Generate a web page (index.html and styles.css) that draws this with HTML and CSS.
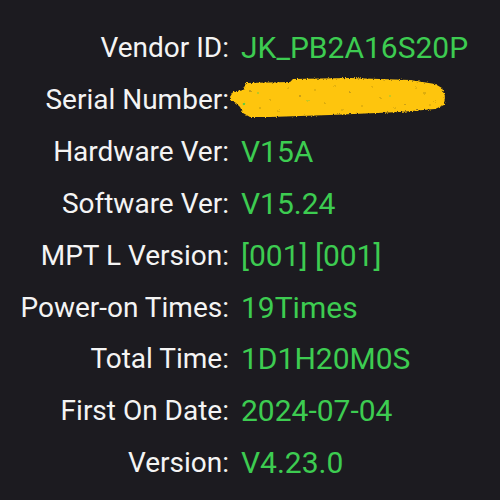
FILE: index.html
```html
<!DOCTYPE html>
<html>
<head>
<meta charset="utf-8">
<link rel="stylesheet" href="styles.css">
</head>
<body>
<div class="info">
  <div class="label">Vendor ID:</div><div class="value">JK_PB2A16S20P</div>
  <div class="label">Serial Number:</div>
  <div class="value serial">
    <svg class="scribble" width="218" height="46" viewBox="0 0 218 46">
      <defs>
        <filter id="rough" x="-5%" y="-20%" width="110%" height="140%">
          <feTurbulence type="fractalNoise" baseFrequency="0.9" numOctaves="2" seed="3" result="n"/>
          <feDisplacementMap in="SourceGraphic" in2="n" scale="3" xChannelSelector="R" yChannelSelector="G"/>
        </filter>
      </defs>
      <g filter="url(#rough)">
        <path d="M0 21 L3 16 L13 14 L16 7 L60 6 L63 3 L120 2 L180 4 L205 8 L212 12 L215 20 L214 29 L205 33 L170 36 L100 39 L40 41 L20 41 L13 37 L10 31 L6 27 L1 24 Z" fill="#fec50f"/>
        <g fill="#7a6418" opacity="0.55">
          <circle cx="20" cy="15" r="1"/><circle cx="40" cy="24" r="0.8"/><circle cx="70" cy="20" r="0.9"/>
          <circle cx="95" cy="27" r="0.8"/><circle cx="120" cy="16" r="0.9"/><circle cx="150" cy="22" r="0.8"/>
          <circle cx="175" cy="28" r="0.9"/><circle cx="195" cy="17" r="0.8"/><circle cx="58" cy="12" r="0.7"/>
          <circle cx="132" cy="30" r="0.7"/><circle cx="186" cy="12" r="0.7"/><circle cx="30" cy="32" r="0.8"/>
          <circle cx="105" cy="10" r="0.7"/><circle cx="165" cy="32" r="0.7"/><circle cx="205" cy="25" r="0.8"/>
          <circle cx="48" cy="35" r="0.7"/><circle cx="85" cy="14" r="0.7"/><circle cx="142" cy="11" r="0.7"/>
          <circle cx="112" cy="34" r="0.7"/><circle cx="200" cy="29" r="0.7"/>
        </g>
        <g fill="#3dcc51" opacity="0.8">
          <circle cx="14" cy="28" r="1.3"/><circle cx="28" cy="17" r="0.8"/><circle cx="78" cy="25" r="0.7"/><circle cx="160" cy="20" r="0.7"/>
        </g>
      </g>
    </svg>
  </div>
  <div class="label">Hardware Ver:</div><div class="value">V15A</div>
  <div class="label">Software Ver:</div><div class="value">V15.24</div>
  <div class="label">MPT L Version:</div><div class="value">[001] [001]</div>
  <div class="label">Power-on Times:</div><div class="value">19Times</div>
  <div class="label">Total Time:</div><div class="value">1D1H20M0S</div>
  <div class="label">First On Date:</div><div class="value">2024-07-04</div>
  <div class="label">Version:</div><div class="value">V4.23.0</div>
</div>
</body>
</html>
```
FILE: styles.css
```css
html, body {
  margin: 0;
  padding: 0;
  background: #1c1b20;
  width: 500px;
  height: 500px;
  overflow: hidden;
}
.info {
  display: grid;
  grid-template-columns: 229px auto;
  column-gap: 12px;
  padding-top: 22px;
  font-family: Roboto, "Liberation Sans", sans-serif;
  line-height: 51.9px;
}
.label {
  text-align: right;
  color: #f4f4f4;
  font-size: 28px;
}
.value {
  color: #3dcc51;
  font-size: 30px;
}
.serial {
  display: flex;
  align-items: flex-start;
  margin-left: -11px;
}
.scribble {
  display: block;
  margin-top: 2px;
}
```
